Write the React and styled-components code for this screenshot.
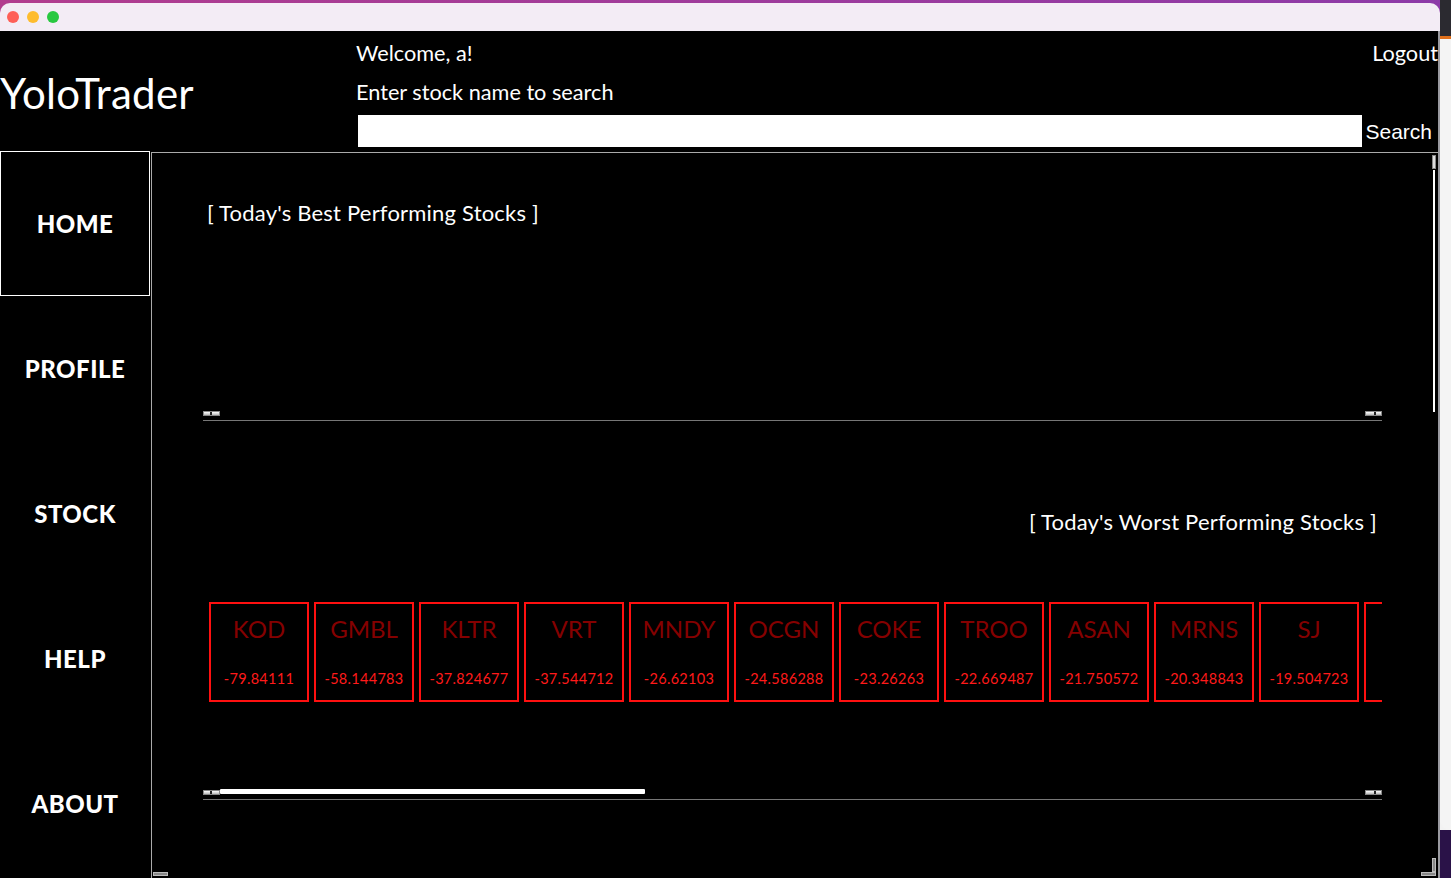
import styled, { createGlobalStyle } from "styled-components";

const GlobalStyle = createGlobalStyle`
  html, body {
    margin: 0;
    padding: 0;
    background: #f4f4f4;
    font-family: Lato, "Open Sans", sans-serif;
  }
`;

const worst = [
  ["KOD", "-79.84111"],
  ["GMBL", "-58.144783"],
  ["KLTR", "-37.824677"],
  ["VRT", "-37.544712"],
  ["MNDY", "-26.62103"],
  ["OCGN", "-24.586288"],
  ["COKE", "-23.26263"],
  ["TROO", "-22.669487"],
  ["ASAN", "-21.750572"],
  ["MRNS", "-20.348843"],
  ["SJ", "-19.504723"],
  ["RIDE", "-19.1122"],
];

const navItems = ["HOME", "PROFILE", "STOCK", "HELP", "ABOUT"];

const Screen = styled.div`
  display: flex;
  width: 1451px;
  height: 878px;
  overflow: hidden;
  background: linear-gradient(90deg, #b13c8e, #8c3aa8);
`;

const Desktop = styled.div`
  flex: 1;
  display: flex;
  flex-direction: column;
  background: #f2f2f2;
  .top {
    height: 36px;
    background: #2b2a30;
    border-bottom: 3px solid #e0701c;
  }
  .mid {
    flex: 1;
    background: #f4f4f4;
    border-bottom-left-radius: 10px;
  }
  .bottom {
    height: 48px;
    background: #2a1248;
  }
`;

const Window = styled.div`
  width: 1440px;
  display: flex;
  flex-direction: column;
  margin-top: 3px;
  border-top-left-radius: 10px;
  border-top-right-radius: 10px;
  overflow: hidden;
`;

const TitleBar = styled.div`
  height: 28px;
  flex-shrink: 0;
  background: #f3ecf5;
  display: flex;
  align-items: center;
  gap: 8px;
  padding-left: 7px;
`;

const Light = styled.span`
  width: 12px;
  height: 12px;
  border-radius: 50%;
  background: ${p => p.$c};
`;

const Content = styled.div`
  flex: 1;
  background: #000;
  display: flex;
  flex-direction: column;
  color: #fff;
  border-right: 2px solid #9a9aa0;
`;

const Header = styled.div`
  height: 120px;
  display: flex;
  flex-shrink: 0;
`;

const Logo = styled.div`
  width: 355px;
  font-size: 42px;
  font-weight: 400;
  padding-top: 37px;
  box-sizing: border-box;
  letter-spacing: 0.3px;
`;

const HeaderRight = styled.div`
  flex: 1;
  display: flex;
  flex-direction: column;
  padding-top: 9px;
`;

const TopRow = styled.div`
  display: flex;
  justify-content: space-between;
  font-size: 21.7px;
  line-height: 26px;
  padding-left: 1px;
`;

const Label = styled.div`
  font-size: 21.7px;
  line-height: 26px;
  margin-top: 13px;
  padding-left: 1px;
`;

const SearchRow = styled.div`
  display: flex;
  align-items: center;
  margin-top: 10px;
  padding-left: 3px;
`;

const SearchInput = styled.input`
  flex: 1;
  height: 32px;
  border: none;
  outline: none;
  background: #fff;
  padding: 0;
`;

const SearchButton = styled.button`
  background: none;
  border: none;
  color: #fff;
  font-family: "Liberation Sans", Arial, sans-serif;
  font-size: 21px;
  padding: 0 6px 0 3px;
  margin-top: 2px;
`;

const Body = styled.div`
  flex: 1;
  display: flex;
  min-height: 0;
`;

const Sidebar = styled.nav`
  width: 151px;
  flex-shrink: 0;
  display: flex;
  flex-direction: column;
`;

const NavItem = styled.div`
  height: 145px;
  width: 150px;
  box-sizing: border-box;
  display: flex;
  align-items: center;
  justify-content: center;
  font-size: 24px;
  font-weight: 900;
  letter-spacing: 0.5px;
  border: 1px solid ${p => (p.$active ? "#fff" : "transparent")};
`;

const Main = styled.main`
  flex: 1;
  position: relative;
  border-top: 1px solid #aaa;
  border-left: 1px solid #aaa;
  margin-top: 1px;
  padding: 0 56px 0 51px;
  overflow: hidden;
`;

const Section = styled.section`
  display: flex;
  flex-direction: column;
  padding-top: ${p => p.$top}px;
`;

const SectionTitle = styled.h2`
  margin: 0;
  font-size: 22px;
  font-weight: 400;
  line-height: 26px;
  letter-spacing: 0.2px;
  align-self: ${p => (p.$right ? "flex-end" : "flex-start")};
  padding: ${p => (p.$right ? "0 5px 0 0" : "0 0 0 4px")};
`;

const Row = styled.div`
  display: flex;
  gap: 5px;
  overflow: hidden;
  box-sizing: border-box;
  height: ${p => p.$h}px;
  padding-left: 6px;
  padding-top: ${p => p.$pt || 0}px;
  align-items: flex-start;
`;

const Card = styled.div`
  width: 100px;
  height: 100px;
  flex-shrink: 0;
  box-sizing: border-box;
  border: 2px solid #ff1010;
  display: flex;
  flex-direction: column;
  align-items: center;
  .ticker {
    color: #850000;
    font-size: 24px;
    margin-top: 11px;
    line-height: 28px;
  }
  .value {
    color: #ff1a1a;
    font-size: 14.5px;
    margin-top: 27px;
    letter-spacing: 0.3px;
  }
`;

const HScroll = styled.div`
  position: relative;
  height: 10px;
  border-bottom: 1px solid #777;
`;

const ScrollBtn = styled.span`
  position: absolute;
  top: 1px;
  ${p => (p.$right ? "right: 0;" : "left: 0;")}
  width: 17px;
  height: 5px;
  background: linear-gradient(#fff, #bbb);
  border: 1px solid #888;
  box-sizing: border-box;
  &::after {
    content: "";
    position: absolute;
    top: 0;
    ${p => (p.$right ? "left: 8px;" : "left: 6px;")}
    width: 2px;
    height: 3px;
    background: #222;
  }
`;

const Thumb = styled.span`
  position: absolute;
  top: 0;
  left: 17px;
  height: 5px;
  background: #fff;
  border-radius: 1px;
`;

const VBar = styled.div`
  position: absolute;
  right: 2px;
  top: 2px;
  width: 4px;
  display: flex;
  flex-direction: column;
  align-items: center;
  .btn {
    width: 4px;
    height: 14px;
    border: 1px solid #888;
    background: #ddd;
    box-sizing: border-box;
  }
  .line {
    width: 2px;
    height: 242px;
    background: #fff;
    margin-top: 1px;
  }
`;

const Corner = styled.span`
  position: absolute;
  bottom: 2px;
  ${p => (p.$right ? "right: 2px;" : "left: 1px;")}
  width: 15px;
  height: 4px;
  background: #888;
  border: 1px solid #bbb;
  box-sizing: border-box;
`;

const CornerV = styled.span`
  position: absolute;
  bottom: 6px;
  right: 2px;
  width: 4px;
  height: 14px;
  background: #888;
  border: 1px solid #bbb;
  box-sizing: border-box;
`;

export default function App() {
  return (
    <>
      <GlobalStyle />
      <Screen>
        <Window>
          <TitleBar>
            <Light $c="#fe5f57" />
            <Light $c="#febc2e" />
            <Light $c="#28c840" />
          </TitleBar>
          <Content>
            <Header>
              <Logo>YoloTrader</Logo>
              <HeaderRight>
                <TopRow>
                  <span>Welcome, a!</span>
                  <span>Logout</span>
                </TopRow>
                <Label>Enter stock name to search</Label>
                <SearchRow>
                  <SearchInput type="text" />
                  <SearchButton>Search</SearchButton>
                </SearchRow>
              </HeaderRight>
            </Header>
            <Body>
              <Sidebar>
                {navItems.map((n, i) => (
                  <NavItem key={n} $active={i === 0}>{n}</NavItem>
                ))}
              </Sidebar>
              <Main>
                <Section $top={47}>
                  <SectionTitle>[ Today's Best Performing Stocks ]</SectionTitle>
                  <Row $h={184} />
                  <HScroll>
                    <ScrollBtn />
                    <ScrollBtn $right />
                  </HScroll>
                </Section>
                <Section $top={88}>
                  <SectionTitle $right>[ Today's Worst Performing Stocks ]</SectionTitle>
                  <Row $h={254} $pt={67}>
                    {worst.map(([t, v]) => (
                      <Card key={t}>
                        <span className="ticker">{t}</span>
                        <span className="value">{v}</span>
                      </Card>
                    ))}
                  </Row>
                  <HScroll>
                    <ScrollBtn />
                    <Thumb style={{ width: 425 }} />
                    <ScrollBtn $right />
                  </HScroll>
                </Section>
                <VBar>
                  <span className="btn" />
                  <span className="line" />
                </VBar>
                <Corner />
                <Corner $right />
                <CornerV />
              </Main>
            </Body>
          </Content>
        </Window>
        <Desktop>
          <div className="top" />
          <div className="mid" />
          <div className="bottom" />
        </Desktop>
      </Screen>
    </>
  );
}
